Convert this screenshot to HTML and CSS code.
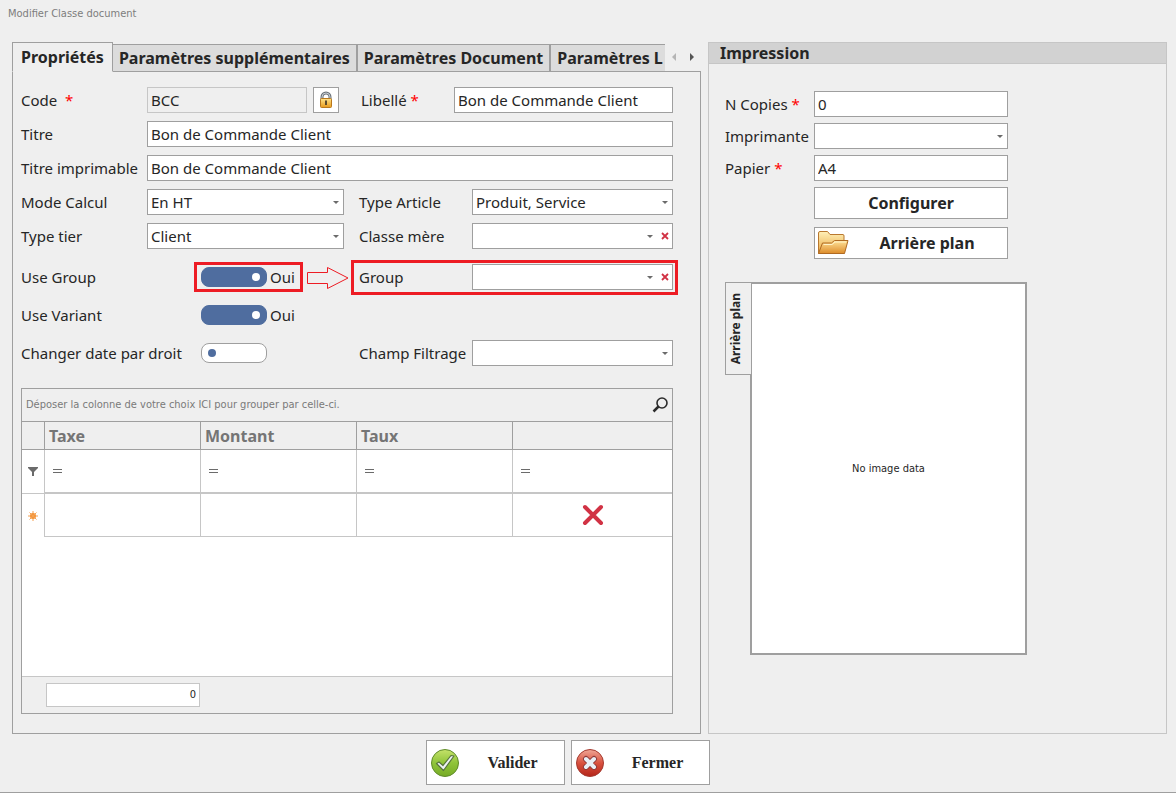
FILE: index.html
```html
<!DOCTYPE html>
<html lang="fr">
<head>
<meta charset="utf-8">
<title>Modifier Classe document</title>
<link rel="stylesheet" href="styles.css">
</head>
<body>
<header class="title">Modifier Classe document</header>
<main class="main">
  <section class="left">
    <div class="tabbar">
      <div class="tabs" role="tablist">
        <button class="tab active" role="tab" aria-selected="true">Propriétés</button>
        <button class="tab" role="tab">Paramètres supplémentaires</button>
        <button class="tab" role="tab">Paramètres Document</button>
        <button class="tab" role="tab">Paramètres L</button>
      </div>
      <button class="scroll off" aria-label="Onglets précédents"><svg width="4" height="8" viewBox="0 0 4 8"><path d="M4 0v8L0 4z" fill="currentColor"/></svg></button>
      <button class="scroll" aria-label="Onglets suivants"><svg width="4" height="8" viewBox="0 0 4 8"><path d="M0 0v8l4-4z" fill="currentColor"/></svg></button>
    </div>
    <div class="panel">
      <div class="row code-row">
        <label for="code">Code&nbsp; <span class="req">*</span></label>
        <input class="box" id="code" value="BCC" disabled>
        <button class="lock" aria-label="Verrouiller">
          <svg width="16" height="18" viewBox="0 0 16 18">
            <defs><linearGradient id="gold" x1="0" y1="0" x2="0" y2="1"><stop offset="0" stop-color="#ffe38a"/><stop offset="1" stop-color="#e89a1c"/></linearGradient></defs>
            <path d="M4 9V6a4 4 0 0 1 8 0v3" fill="none" stroke="#6d747b" stroke-width="3"/>
            <path d="M4 9V6a4 4 0 0 1 8 0v3" fill="none" stroke="#c5ccd2" stroke-width="1"/>
            <rect x="2.5" y="7.5" width="11" height="9" rx="1" fill="url(#gold)" stroke="#b9781c"/>
            <path d="M7 9.500h2v4.500H7z" fill="#5d4a2a"/>
          </svg>
        </button>
        <label class="lib" for="lib">Libellé <span class="req">*</span></label>
        <input class="box" id="lib" value="Bon de Commande Client">
      </div>
      <div class="row">
        <div class="pair wide"><label for="titre">Titre</label><input class="box" id="titre" value="Bon de Commande Client"></div>
      </div>
      <div class="row">
        <div class="pair wide"><label for="titrei">Titre imprimable</label><input class="box" id="titrei" value="Bon de Commande Client"></div>
      </div>
      <div class="row">
        <div class="pair one"><label for="mode">Mode Calcul</label><span class="combo"><select class="box" id="mode"><option>En HT</option></select></span></div>
        <div class="pair two"><label for="article">Type Article</label><span class="combo"><select class="box" id="article"><option>Produit, Service</option></select></span></div>
      </div>
      <div class="row">
        <div class="pair one"><label for="tier">Type tier</label><span class="combo"><select class="box" id="tier"><option>Client</option></select></span></div>
        <div class="pair two"><label for="mere">Classe mère</label><span class="combo clearable"><select class="box" id="mere"><option></option></select><button class="clear" aria-label="Effacer la classe mère"><svg width="8" height="8" viewBox="0 0 8 8"><path d="M1 1l6 6M7 1L1 7" stroke="#d13244" stroke-width="1.8"/></svg></button></span></div>
      </div>
      <div class="row spaced">
        <div class="pair one"><label for="group-on">Use Group</label>
          <span class="toggle marked"><input type="checkbox" role="switch" id="group-on" checked><span>Oui</span>
            <svg class="arrow" width="42" height="24" viewBox="0 0 42 24"><path d="M.5 6.500h20v-5L41 12 20.500 22.500v-5H.5z" fill="none" stroke="#ed1c24"/></svg>
          </span>
        </div>
        <div class="pair two marked"><label for="group">Group</label><span class="combo clearable"><select class="box" id="group"><option></option></select><button class="clear" aria-label="Effacer le groupe"><svg width="8" height="8" viewBox="0 0 8 8"><path d="M1 1l6 6M7 1L1 7" stroke="#d13244" stroke-width="1.8"/></svg></button></span></div>
      </div>
      <div class="row spaced">
        <div class="pair one"><label for="variant">Use Variant</label><span class="toggle"><input type="checkbox" role="switch" id="variant" checked><span>Oui</span></span></div>
      </div>
      <div class="row spaced">
        <div class="pair one"><label for="droit">Changer date par droit</label><span class="toggle"><input type="checkbox" role="switch" id="droit"></span></div>
        <div class="pair two"><label for="filtre">Champ Filtrage</label><span class="combo"><select class="box" id="filtre"><option></option></select></span></div>
      </div>

      <div class="grid">
        <div class="groupbar">
          <span>Déposer la colonne de votre choix ICI pour grouper par celle-ci.</span>
          <button class="find" aria-label="Rechercher"><svg width="16" height="16" viewBox="0 0 16 16" fill="none" stroke="#2b2b2b"><circle cx="10" cy="6" r="5" stroke-width="1.6"/><path d="M6.500 9.500L1.500 14.500" stroke-width="2.5"/></svg></button>
        </div>
        <table>
          <colgroup><col class="c0"><col class="c1"><col class="c1"><col class="c1"><col></colgroup>
          <thead><tr><th></th><th>Taxe</th><th>Montant</th><th>Taux</th><th></th></tr></thead>
          <tbody>
            <tr class="filter">
              <td class="ind"><svg width="10" height="9" viewBox="0 0 10 9"><path d="M0 0h10v1L6 5v4H4V5L0 1z" fill="#6b6b6b"/></svg></td>
              <td><i class="eq"></i></td><td><i class="eq"></i></td><td><i class="eq"></i></td><td><i class="eq"></i></td>
            </tr>
            <tr class="new">
              <td class="ind"><svg width="10" height="10" viewBox="0 0 10 10"><circle cx="5" cy="5" r="3" fill="#f28c28"/><path d="M5 0v10M0 5h10M1.500 1.500l7 7M8.500 1.500l-7 7" stroke="#f5a050" stroke-width="1"/></svg></td>
              <td></td><td></td><td></td>
              <td class="del"><button aria-label="Supprimer"><svg width="22" height="22" viewBox="0 0 22 22"><path d="M3 3l16 16M19 3L3 19" stroke="#d13244" stroke-width="4" stroke-linecap="round"/></svg></button></td>
            </tr>
          </tbody>
        </table>
        <div class="summary"><output>0</output></div>
      </div>
    </div>
  </section>

  <section class="print">
    <h2>Impression</h2>
    <div class="print-body">
      <div class="print-form">
        <label for="copies">N Copies <span class="req">*</span></label><input class="box" id="copies" value="0">
        <label for="impr">Imprimante</label><span class="combo"><select class="box" id="impr"><option></option></select></span>
        <label for="papier">Papier <span class="req">*</span></label><input class="box" id="papier" value="A4">
        <div class="actions">
          <button class="btn"><span>Configurer</span></button>
          <button class="btn">
            <svg width="32" height="26" viewBox="0 0 32 26">
              <defs>
                <linearGradient id="back" x1="0" y1="0" x2="0" y2="1"><stop offset="0" stop-color="#fff0b8"/><stop offset="1" stop-color="#e9a640"/></linearGradient>
                <linearGradient id="front" x1="0" y1="0" x2="0" y2="1"><stop offset="0" stop-color="#ffe39a"/><stop offset="1" stop-color="#dd8c2a"/></linearGradient>
              </defs>
              <path d="M1.500 23.500V3q0-1.500 1.500-1.500h7.500l2.500 3h13q1 0 1 1.500v17.500z" fill="url(#back)" stroke="#b9782f"/>
              <path d="M1.500 23.500L5.500 13h9l3-2.500h13.500l-3.500 13z" fill="url(#front)" stroke="#b06a22"/>
              <path d="M6.500 14.500h8.500l3-2.500h11" fill="none" stroke="#fff3c9"/>
            </svg>
            <span>Arrière plan</span>
          </button>
        </div>
      </div>
      <div class="preview">
        <button class="vtab"><span>Arrière plan</span></button>
        <div class="image">No image data</div>
      </div>
    </div>
  </section>
</main>
<footer class="footer">
  <button class="cmd">
    <svg width="28" height="28" viewBox="0 0 28 28">
      <defs><linearGradient id="green" x1="0" y1="0" x2="0" y2="1"><stop offset="0" stop-color="#c5e26a"/><stop offset=".5" stop-color="#8fc43a"/><stop offset="1" stop-color="#76ab25"/></linearGradient></defs>
      <circle cx="14" cy="14" r="13.5" fill="url(#green)" stroke="#5f8b2c"/>
      <path d="M5.500 14.500l2.500-1.500 4 3.500L20 6.500l3 .5-10.500 14.500z" fill="#eef2f6" stroke="#56743c" stroke-width="1.2" stroke-linejoin="round"/>
    </svg>
    <span>Valider</span>
  </button>
  <button class="cmd">
    <svg width="28" height="28" viewBox="0 0 28 28">
      <defs><linearGradient id="red" x1="0" y1="0" x2="0" y2="1"><stop offset="0" stop-color="#efa797"/><stop offset=".5" stop-color="#d9523f"/><stop offset="1" stop-color="#b52519"/></linearGradient></defs>
      <circle cx="14" cy="14" r="13.5" fill="url(#red)" stroke="#a43a30"/>
      <path d="M10 10l8 8M18 10l-8 8" stroke="#8c3a3a" stroke-width="6" stroke-linecap="round"/>
      <path d="M10 10l8 8M18 10l-8 8" stroke="#e9eff6" stroke-width="4" stroke-linecap="round"/>
    </svg>
    <span>Fermer</span>
  </button>
</footer>
</body>
</html>
```
FILE: styles.css
```css
* { box-sizing: border-box; }

:root {
  --line: #9f9f9f;
  --soft: #c6c6c6;
  --bg: #efefef;
  --ink: #262626;
  --red: #ed1c24;
  --small: 11px/16px "DejaVu Sans Condensed", "Noto Sans", sans-serif;
}

body {
  margin: 0;
  min-height: 100vh;
  display: flex;
  flex-direction: column;
  background: var(--bg);
  border-bottom: 1px solid var(--line);
  color: var(--ink);
  font: 15px/20px "Noto Sans", "Open Sans", sans-serif;
}

button, input, select {
  font: inherit;
  color: inherit;
  margin: 0;
  border-radius: 0;
}

button { padding: 0; border: 0; background: none; }
svg { display: block; flex: none; }

.title {
  padding: 6px 8px 20px;
  font: var(--small);
  color: #7d7d7d;
}

.main {
  flex: 1;
  display: grid;
  grid-template-columns: 689fr 459fr;
  gap: 7px;
  padding: 0 9px 0 12px;
}

.left { display: flex; flex-direction: column; min-width: 0; }

/* tabs */
.tabbar { display: flex; align-items: center; margin-bottom: -1px; position: relative; }
.tabs { flex: 1; display: flex; align-items: flex-end; overflow: hidden; min-width: 0; }

.tab {
  flex: none;
  height: 28px;
  padding: 0 6px;
  border: 1px solid var(--line);
  background: #dcdcdc;
  font-size: 16px;
  font-weight: 700;
  line-height: 24px;
  white-space: nowrap;
}

.tab:last-child { width: 160px; text-align: left; }

.tab.active {
  height: 30px;
  padding: 0 8px;
  margin-right: -1px;
  background: var(--bg);
  border-bottom-color: var(--bg);
  z-index: 1;
}

.scroll { width: 18px; height: 24px; display: grid; place-items: center; color: #555; }
.scroll.off { color: #b5b5b5; }

/* form */
.panel {
  flex: 1;
  display: flex;
  flex-direction: column;
  gap: 8px;
  padding: 15px 27px 19px 8px;
  border: 1px solid var(--line);
}

.row { display: flex; gap: 15px; }
.row.spaced { margin-top: 7px; }
label { white-space: nowrap; }
.req { color: #f00; }

.pair { display: grid; align-items: center; min-width: 0; position: relative; }
.pair.one { flex: 323 1 0; grid-template-columns: 126px minmax(0, 1fr); }
.pair.two { flex: 314 1 0; grid-template-columns: 113px minmax(0, 1fr); }
.pair.wide { flex: 1; grid-template-columns: 126px minmax(0, 1fr); }

.code-row {
  display: grid;
  grid-template-columns: 126px minmax(0, 166fr) 26px 115px minmax(0, 219fr);
  gap: 0;
  align-items: center;
}

.code-row .lib { padding-left: 22px; }
.code-row #code { width: calc(100% - 6px); }

.box {
  display: block;
  width: 100%;
  height: 26px;
  padding: 0 3px;
  border: 1px solid var(--line);
  background: #fff;
  line-height: 24px;
  appearance: none;
}

.box:disabled { background: var(--bg); border-color: var(--soft); color: var(--ink); opacity: 1; }

.lock { height: 26px; border: 1px solid var(--line); background: #fff; display: grid; place-items: center; }

.combo { position: relative; display: block; }

.combo::after {
  content: "";
  position: absolute;
  right: 5px;
  top: 12px;
  border: 3px solid transparent;
  border-top-color: #6b6b6b;
  border-bottom: 0;
  pointer-events: none;
}

.combo.clearable::after { right: 20px; }
.clear { position: absolute; right: 4px; top: 9px; }

.toggle { display: flex; align-items: center; gap: 3px; justify-self: start; margin-left: 54px; position: relative; }

.toggle input {
  appearance: none;
  width: 66px;
  height: 20px;
  border: 1px solid var(--line);
  border-radius: 8px;
  background: #fff;
  display: flex;
  align-items: center;
  padding: 0 6px;
}

.toggle input::before { content: ""; width: 8px; height: 8px; border-radius: 50%; background: #4f6d9f; }
.toggle input:checked { background: #4f6d9f; border-color: #4f6d9f; justify-content: flex-end; }
.toggle input:checked::before { background: #fff; }

/* highlight frames */
.marked::before { content: ""; position: absolute; border: 3px solid var(--red); pointer-events: none; }
.toggle.marked::before { inset: -5px -8px -5px -7px; }
.pair.marked::before { inset: -4px -5px -5px -8px; }
.arrow { position: absolute; left: 106px; top: -1px; }

/* grid */
.grid {
  flex: 1;
  display: flex;
  flex-direction: column;
  margin-top: 14px;
  border: 1px solid var(--line);
  background: #fff;
}

.groupbar {
  display: flex;
  align-items: center;
  justify-content: space-between;
  height: 32px;
  padding: 0 4px;
  background: var(--bg);
  font: var(--small);
  color: #7a7a7a;
}

table { width: 100%; table-layout: fixed; border-spacing: 0; }
.c0 { width: 23px; }
.c1 { width: 24%; }

th {
  height: 29px;
  padding: 0 4px;
  border: solid var(--line);
  border-width: 1px 1px 1px 0;
  background: var(--bg);
  color: #757575;
  text-align: left;
  font-size: 16px;
  line-height: 24px;
}

td { height: 44px; padding: 0 8px; border-right: 1px solid var(--soft); border-bottom: 1px solid var(--soft); }
.filter td { border-bottom-width: 2px; }
.filter .ind { border-bottom-width: 1px; }
.new td { height: 43px; }
.new .ind { border-bottom: 0; }
th:last-child, td:last-child { border-right: 0; }
td.ind { padding: 0 6px; }
.eq { display: block; width: 9px; height: 4px; border: solid #6b6b6b; border-width: 1px 0; }
.del button { display: block; margin: 0 auto; }

.summary { margin-top: auto; padding: 6px 24px; border-top: 1px solid var(--soft); background: var(--bg); }
.summary output {
  display: block;
  width: 154px;
  height: 24px;
  padding: 3px;
  border: 1px solid var(--soft);
  background: #fff;
  font: var(--small);
  text-align: right;
}

/* print panel */
.print { border: 1px solid var(--soft); min-width: 0; }
.print h2 {
  margin: 0;
  padding: 0 11px;
  border-bottom: 1px solid var(--soft);
  background: #d2d2d2;
  font-size: 16px;
  line-height: 20px;
}

.print-body { padding: 27px 16px; }
.print-form { display: grid; grid-template-columns: 89px minmax(0, 194px); gap: 6px 0; align-items: center; }
.actions { grid-column: 2; display: grid; gap: 8px; }

.btn {
  display: flex;
  align-items: center;
  height: 32px;
  padding: 0 2px;
  border: 1px solid var(--line);
  background: #fff;
  font-size: 16px;
  font-weight: 700;
}

.btn span, .cmd span { flex: 1; text-align: center; }

.preview { display: flex; align-items: flex-start; margin-top: 23px; }

.vtab {
  position: relative;
  width: 27px;
  height: 93px;
  margin-right: -2px;
  border: 1px solid var(--line);
  background: var(--bg);
  font-size: 12px;
  font-weight: 700;
  display: grid;
  align-items: center;
  justify-items: start;
}

.vtab span { writing-mode: vertical-rl; transform: rotate(180deg); }

.image {
  flex: 0 1 277px;
  height: 373px;
  border: 2px solid var(--line);
  background: #fff;
  display: grid;
  place-items: center;
  font: var(--small);
}

/* commands */
.footer { display: flex; justify-content: center; gap: 6px; padding: 6px 40px 7px 0; }

.cmd {
  display: flex;
  align-items: center;
  gap: 2px;
  width: 139px;
  height: 45px;
  padding: 0 0 0 4px;
  border: 1px solid var(--line);
  background: #fff;
  font: 700 16px/20px "Liberation Serif", serif;
}
```
